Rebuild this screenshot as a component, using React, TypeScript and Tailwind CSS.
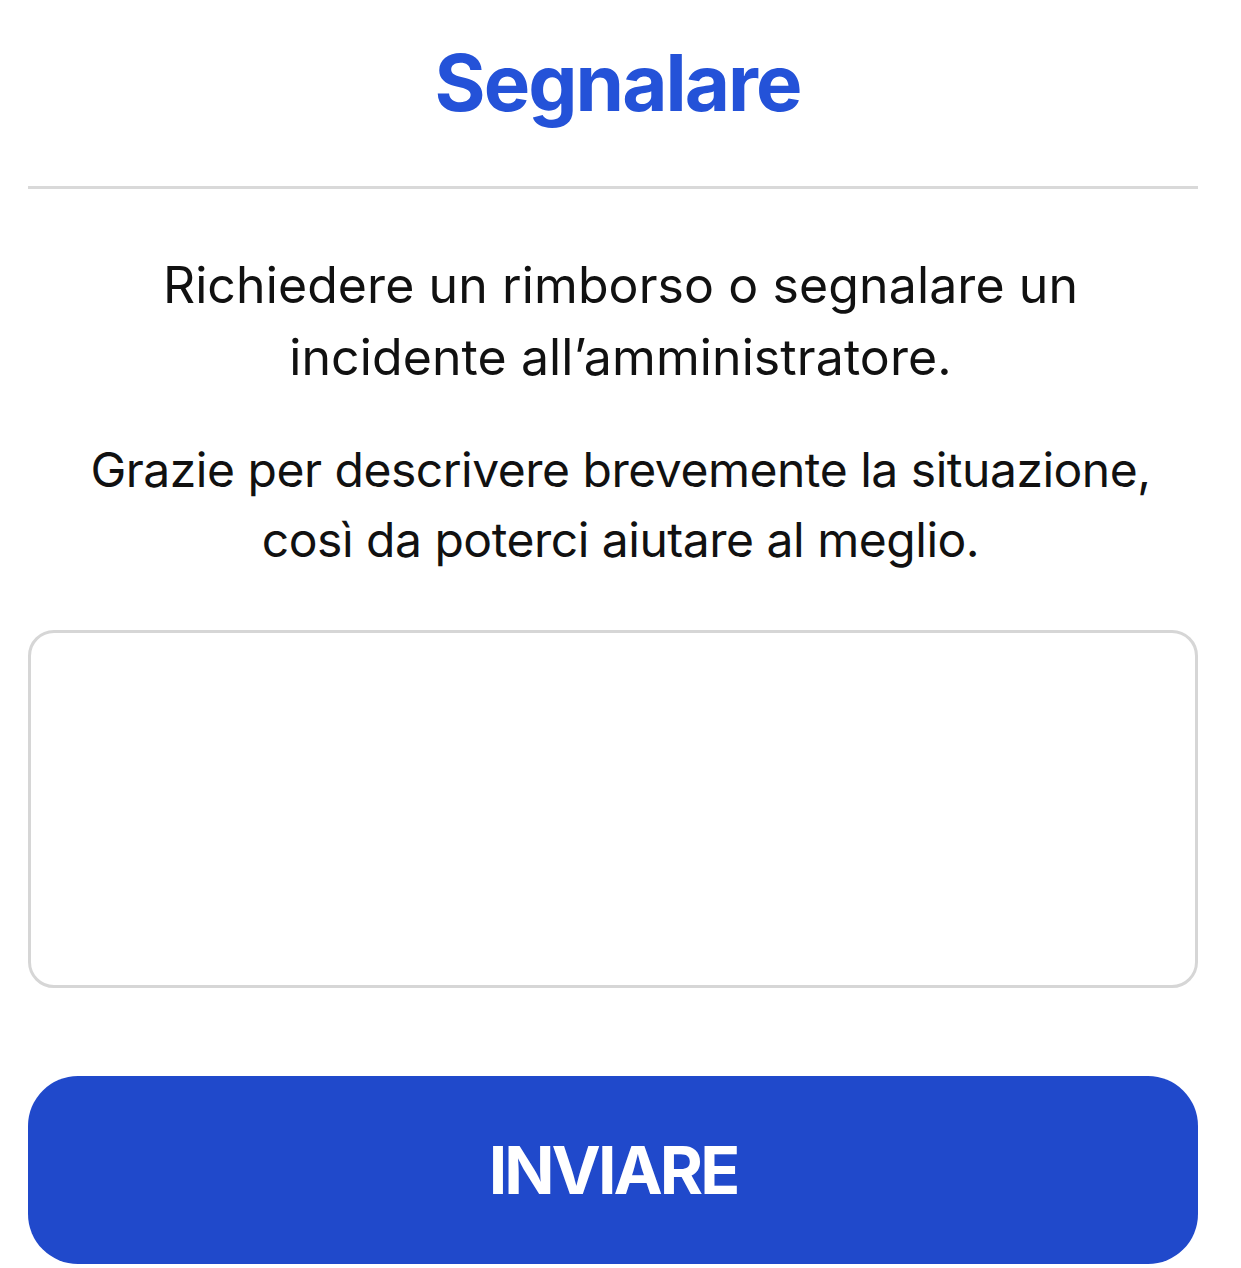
export default function App() {
  return (
    <div
      className="min-h-screen bg-white px-[28px] text-[#111111]"
      style={{ fontFamily: 'Inter, "Noto Sans", sans-serif' }}
    >
      <h1 className="pt-[37px] pr-[6px] pb-[57px] text-center text-[78px] font-bold leading-[92px] tracking-[-0.025em] text-[#2452d8]">
        Segnalare
      </h1>

      <div className="mr-[15px] h-[3px] bg-[#d9d9d9]" />

      <p className="mt-[60px] text-center text-[50px] leading-[72px] tracking-[0.002em]">
        Richiedere un rimborso o segnalare un
        <br />
        incidente all’amministratore.
      </p>
      <p className="mt-[42px] text-center text-[48px] leading-[70px] tracking-[-0.01em]">
        Grazie per descrivere brevemente la situazione,
        <br />
        così da poterci aiutare al meglio.
      </p>

      <textarea className="mt-[55px] block h-[358px] w-[calc(100%-15px)] resize-none rounded-[26px] border-[3px] border-[#d6d6d6] bg-white p-6 text-[40px] outline-none" />

      <button className="mt-[88px] flex h-[188px] w-[calc(100%-15px)] items-center justify-center rounded-[50px] bg-[#2049cb] text-[66px] font-bold tracking-[-0.045em] text-white">
        INVIARE
      </button>
    </div>
  );
}
